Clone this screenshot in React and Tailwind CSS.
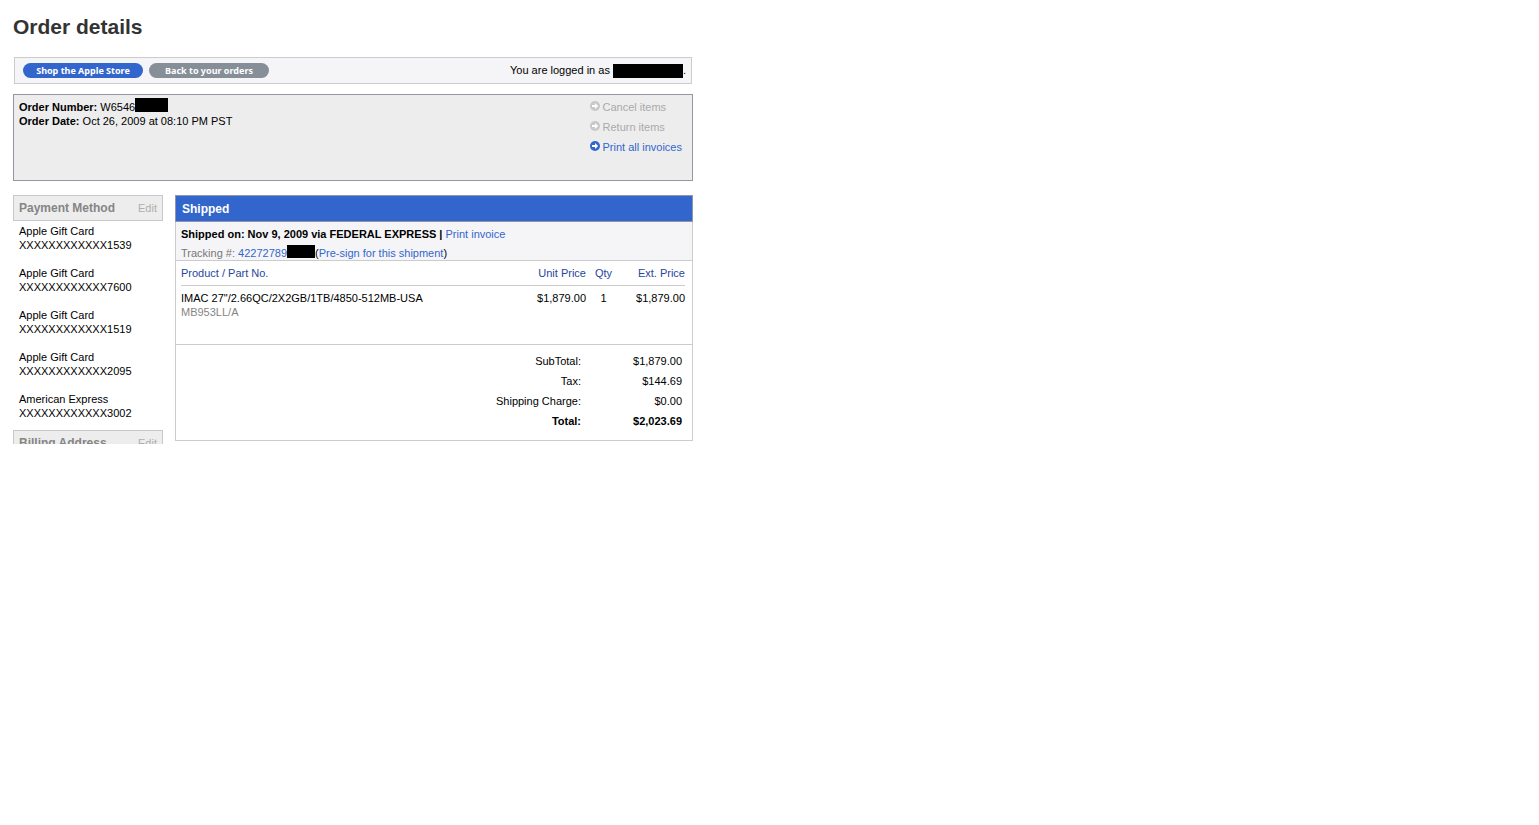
const PAYMENTS = [
  { id: 1, name: 'Apple Gift Card', number: 'XXXXXXXXXXXX1539' },
  { id: 2, name: 'Apple Gift Card', number: 'XXXXXXXXXXXX7600' },
  { id: 3, name: 'Apple Gift Card', number: 'XXXXXXXXXXXX1519' },
  { id: 4, name: 'Apple Gift Card', number: 'XXXXXXXXXXXX2095' },
  { id: 5, name: 'American Express', number: 'XXXXXXXXXXXX3002' },
];

const ITEMS = [
  {
    part: 'MB953LL/A',
    name: 'IMAC 27"/2.66QC/2X2GB/1TB/4850-512MB-USA',
    unitPrice: '$1,879.00',
    qty: 1,
    extPrice: '$1,879.00',
  },
];

const TOTALS = [
  { label: 'SubTotal:', amount: '$1,879.00' },
  { label: 'Tax:', amount: '$144.69' },
  { label: 'Shipping Charge:', amount: '$0.00' },
  { label: 'Total:', amount: '$2,023.69', bold: true },
];

// Black bar over private data
const Redacted = ({ className }) => (
  <span className={`inline-block shrink-0 bg-black ${className}`} />
);

const ArrowIcon = ({ className }) => (
  <svg viewBox="0 0 10 10" className={`w-[10px] h-[10px] mb-[2px] shrink-0 ${className}`} aria-hidden="true">
    <circle cx="5" cy="5" r="5" fill="currentColor" />
    <path d="M2 4h3V2l3.2 3L5 8V6H2z" fill="#fff" />
  </svg>
);

const PillButton = ({ className, children }) => (
  <button
    className={`w-[120px] h-[15px] rounded-full text-white text-[9px] leading-[15px] font-bold font-['Noto_Sans',sans-serif] whitespace-nowrap ${className}`}
  >
    {children}
  </button>
);

const PanelHeader = ({ title }) => (
  <div className="flex items-center justify-between h-[26px] px-[5px] border border-[#c8c8c8] bg-[#ededed]">
    <h2 className="text-[12px] font-bold text-[#858585]">{title}</h2>
    <span className="text-[#b0aea6]">Edit</span>
  </div>
);

const ActionLink = ({ disabled, children }) => (
  <li>
    <a
      href="#"
      aria-disabled={disabled}
      className={`flex items-center gap-[3px] h-5 ${disabled ? 'text-[#aaaaaa]' : 'text-[#3366cc]'}`}
    >
      <ArrowIcon className={disabled ? 'text-[#c8c8c8]' : 'text-[#3366cc]'} />
      {children}
    </a>
  </li>
);

const Shipment = () => (
  <section className="flex-1 min-w-0">
    <h2 className="h-[27px] px-[6px] border border-[#8e96a8] bg-[#3366cc] text-white text-[12px] leading-[26px] font-bold">
      Shipped
    </h2>

    <div className="border-x border-b border-[#cccccc]">
      <div className="h-[39px] px-[5px] pt-[2px] border-b border-[#cccccc] bg-[#f5f5f8]">
        <p className="h-5 leading-5">
          <b>Shipped on: Nov 9, 2009 via FEDERAL EXPRESS |</b>{' '}
          <a href="#" className="text-[#3366cc]">Print invoice</a>
        </p>
        <p className="flex h-4 leading-[18px]">
          <span className="text-[#777777]">Tracking #:&nbsp;</span>
          <a href="#" className="text-[#3366cc]">42272789</a>
          <Redacted className="w-7 h-[13px] mt-px" />
          (<a href="#" className="text-[#3366cc]">Pre-sign for this shipment</a>)
        </p>
      </div>

      <div className="pl-[5px] pr-[7px] h-[84px] border-b border-[#cccccc]">
        <table className="w-full table-fixed border-separate border-spacing-0">
          <thead>
            <tr className="h-[25px] text-[#26479e]">
              <th className="border-b border-[#cccccc] font-normal text-left">Product / Part No.</th>
              <th className="w-[80px] border-b border-[#cccccc] font-normal text-right">Unit Price</th>
              <th className="w-[35px] border-b border-[#cccccc] font-normal text-center">Qty</th>
              <th className="w-[64px] border-b border-[#cccccc] font-normal text-right">Ext. Price</th>
            </tr>
          </thead>
          <tbody>
            {ITEMS.map((item) => (
              <tr key={item.part} className="align-top">
                <td className="pt-[5px]">
                  {item.name}
                  <div className="text-[#858585]">{item.part}</div>
                </td>
                <td className="pt-[5px] text-right">{item.unitPrice}</td>
                <td className="pt-[5px] text-center">{item.qty}</td>
                <td className="pt-[5px] text-right">{item.extPrice}</td>
              </tr>
            ))}
          </tbody>
        </table>
      </div>

      <div className="pt-[6px] pb-[9px] pr-[10px]">
        <table className="w-full">
          <tbody>
            {TOTALS.map((row) => (
              <tr key={row.label} className={`h-5 text-right ${row.bold ? 'font-bold' : ''}`}>
                <th className={row.bold ? 'font-bold' : 'font-normal'}>{row.label}</th>
                <td className="w-[101px]">{row.amount}</td>
              </tr>
            ))}
          </tbody>
        </table>
      </div>
    </div>
  </section>
);

export default function App() {
  return (
    <main className="max-w-[706px] px-[13px] pt-3 bg-white text-black text-[11px] leading-[14px] font-['Liberation_Sans',Arial,sans-serif]">
      <h1 className="text-[21px] leading-[30px] font-bold text-[#333333]">Order details</h1>

      <div className="flex items-center justify-between h-[27px] mt-[15px] mx-px pl-2 pr-[5px] border border-[#cccccc] bg-[#f5f5f8]">
        <div className="flex gap-[6px]">
          <PillButton className="bg-[#3366cc]">Shop the Apple Store</PillButton>
          <PillButton className="bg-[#868e98]">Back to your orders</PillButton>
        </div>
        <p className="flex leading-[13px]">
          You are logged in as&nbsp;
          <Redacted className="w-[70px] h-[14px]" />.
        </p>
      </div>

      <div className="flex justify-between h-[87px] mt-[10px] px-[5px] border border-[#9197a3] bg-[#ededed]">
        <div className="pt-[5px]">
          <p className="flex">
            <b>Order Number:</b>&nbsp;W6546
            <Redacted className="w-[33px] h-[14px] -mt-[2px]" />
          </p>
          <p>
            <b>Order Date:</b> Oct 26, 2009 at 08:10 PM PST
          </p>
        </div>
        <ul className="pt-[2px] pr-[5px]">
          <ActionLink disabled>Cancel items</ActionLink>
          <ActionLink disabled>Return items</ActionLink>
          <ActionLink>Print all invoices</ActionLink>
        </ul>
      </div>

      <div className="flex items-start gap-3 mt-[14px]">
        <aside className="w-[150px] shrink-0">
          <PanelHeader title="Payment Method" />
          <ul className="flex flex-col gap-[14px] px-[6px] pt-[3px] pb-[10px]">
            {PAYMENTS.map((payment) => (
              <li key={payment.id}>
                {payment.name}
                <br />
                {payment.number}
              </li>
            ))}
          </ul>
          <div className="h-[14px] overflow-hidden">
            <PanelHeader title="Billing Address" />
          </div>
        </aside>

        <Shipment />
      </div>
    </main>
  );
}
